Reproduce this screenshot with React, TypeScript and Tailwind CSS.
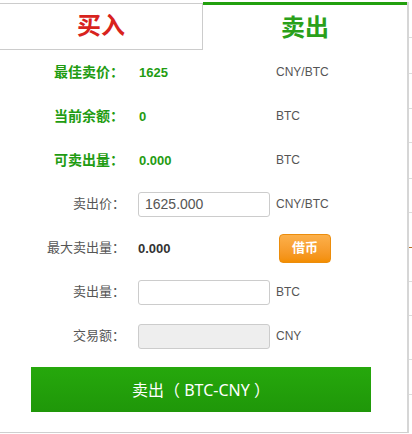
import type { ReactNode } from 'react'

const font = 'font-["Liberation_Sans","Noto_Sans_CJK_SC",sans-serif]'
const inputBox = 'h-[25px] w-[132px] rounded-[3px] border border-[#cccccc] px-[6px] text-[14px] text-[#555] outline-none'

const ticks = [
  { top: 38, color: '#dcdcdc' },
  { top: 36, color: '#dcdcdc' },
  { top: 35, color: '#dcdcdc' },
  { top: 34, color: '#dcdcdc' },
  { top: 36, color: '#dcdcdc' },
  { top: 34, color: '#dcdcdc' },
  { top: 35, color: '#b8702a' },
  { top: 34, color: '#dcdcdc' },
  { top: 34, color: '#dcdcdc' },
  { top: 44, color: '#dcdcdc' },
  { top: 35, color: '#dcdcdc' },
]

function Row({
  label,
  green,
  unit,
  children,
}: {
  label: string
  green?: boolean
  unit?: ReactNode
  children: ReactNode
}) {
  return (
    <div className="flex h-[44px] items-center">
      <div
        className={
          green
            ? 'w-[124px] text-right text-[14px] font-bold text-[#1f9c12]'
            : 'w-[125px] text-right text-[13px] text-[#555]'
        }
      >
        {label}
      </div>
      <div className={green ? 'ml-[15px] w-[131px]' : 'ml-[13px] w-[132px]'}>{children}</div>
      <div className="ml-[6px] text-[12px] text-[#555]">{unit}</div>
    </div>
  )
}

export default function App() {
  return (
    <div className={`flex h-[434px] w-[412px] bg-white ${font}`}>
      <div className="mt-[2px] flex h-[431px] w-[409px] flex-col border-r-2 border-b border-r-[#d6d6d6] border-b-[#cfcfcf]">
        <div className="flex h-[48px] items-start">
          <div className="mt-px flex h-[47px] w-[203px] items-center justify-center border-y border-r border-[#cccccc] pb-[2px] text-[24px] font-bold text-[#d8231d]">
            买入
          </div>
          <div className="flex h-[48px] w-[204px] items-center justify-center border-t-[3px] border-[#22a00e] text-[24px] font-bold text-[#2aa01a]">
            卖出
          </div>
        </div>

        <div>
          <Row label="最佳卖价：" green unit="CNY/BTC">
            <span className="text-[13px] font-bold text-[#1f9c12]">1625</span>
          </Row>
          <Row label="当前余额：" green unit="BTC">
            <span className="text-[13px] font-bold text-[#1f9c12]">0</span>
          </Row>
          <Row label="可卖出量：" green unit="BTC">
            <span className="text-[13px] font-bold text-[#1f9c12]">0.000</span>
          </Row>
          <Row label="卖出价：" unit="CNY/BTC">
            <input className={`${inputBox} bg-white`} defaultValue="1625.000" />
          </Row>
          <Row
            label="最大卖出量："
            unit={
              <button
                type="button"
                className="ml-[3px] h-[29px] w-[52px] rounded-[4px] border border-[#ec8d0c] bg-gradient-to-b from-[#fcb04a] to-[#f38e00] text-[13px] font-bold text-white"
              >
                借币
              </button>
            }
          >
            <span className="text-[13px] font-bold text-[#333]">0.000</span>
          </Row>
          <Row label="卖出量：" unit="BTC">
            <input className={`${inputBox} bg-white`} />
          </Row>
          <Row label="交易额：" unit="CNY">
            <input className={`${inputBox} bg-[#eeeeee]`} disabled />
          </Row>
        </div>

        <button
          type="button"
          className='mt-[9px] ml-[31px] h-[45px] w-[340px] bg-gradient-to-b from-[#26a80c] to-[#1f9709] font-["Noto_Sans","Noto_Sans_CJK_SC",sans-serif] text-[16px] text-white'
        >
          卖出（ BTC-CNY ）
        </button>
      </div>

      <div className="flex flex-1 flex-col">
        {ticks.map((t, i) => (
          <div key={i} className="h-px w-full" style={{ marginTop: t.top - 1, backgroundColor: t.color }} />
        ))}
      </div>
    </div>
  )
}
